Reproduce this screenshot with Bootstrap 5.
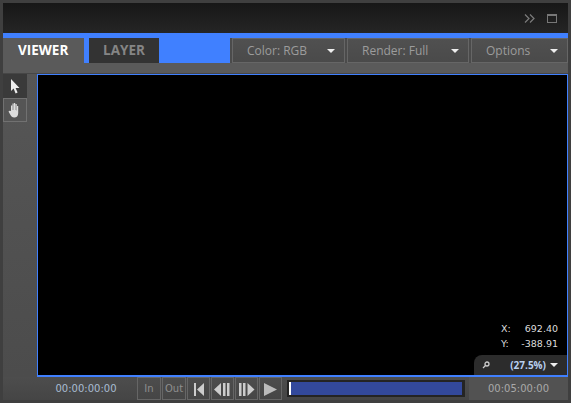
<!DOCTYPE html>
<html lang="en"><head><meta charset="utf-8">
<link href="https://cdn.jsdelivr.net/npm/bootstrap@5.3.0/dist/css/bootstrap.min.css" rel="stylesheet">
<style>
html,body{height:403px;width:571px;overflow:hidden;margin:0;background:#444}
.shell{width:571px;height:403px;padding:3px;background:#3f3f3f;font-family:"Open Sans","DejaVu Sans",sans-serif}
.titlebar{height:30px;background:linear-gradient(#171717,#252525);padding-right:11px;gap:12px;flex:none}
.tabstrip{height:30px;background:#4080ff;padding-top:5px;flex:none}
.vtab{width:81px;height:25px;background:#5a5a5a;color:#fff;font:bold 13.5px "Open Sans",sans-serif;padding-left:15px;line-height:24px}
.ltab{width:70px;height:25px;background:#333;color:#858585;font:bold 13.5px "Open Sans",sans-serif;margin-left:5px;text-align:center;line-height:24px}
.menus{margin-left:auto;background:#4b4b4b;height:25px;padding-left:2px;gap:2px;width:338px}
.menubtn{height:25px;background:linear-gradient(#505050,#4a4a4a);border:1px solid #666;color:#9c9c9c;font-size:12px;line-height:22px;padding:0 9px 0 14px;justify-content:space-between;align-items:center}
.caretd{width:0;height:0;border-left:4px solid transparent;border-right:4px solid transparent;border-top:4px solid #eee;flex:none}
.m1{width:113px}.m2{width:122px}.m3{width:97px}
.sep{height:11px;background:#5a5a5a;border-bottom:1px solid #464646;flex:none}
.middle{flex:1;min-height:0;background:linear-gradient(#565656,#4c4c4c)}
.rail{width:34px;flex:none}
.toolc{width:24px;height:24px;background:#3a3a3a}
.toolh{width:24px;height:24px;background:#555;border:1px solid #717171}
.toolw{background:#333;width:24px}
.stage{flex:1;background:#000;border-top:1px solid #4080ff;border-left:1px solid #4080ff;border-right:1px solid #4080ff;position:relative}
.coords{position:absolute;right:9px;top:246px;color:#ddd;font:9.5px/15px "DejaVu Sans",sans-serif;width:57px}
.zoomtag{position:absolute;right:0;bottom:0;width:93px;height:20px;background:#2c2c2c;border-top-left-radius:8px;font:bold 10px "Open Sans",sans-serif;color:#b9d0f0;padding:0 9px 0 8px}
.bottombar{height:23px;background:linear-gradient(#4d4d4d,#454545);flex:none}
.railcap{height:2px;width:34px;background:#4c4c4c;flex:none}
.bluel{height:2px;background:#4080ff;flex:1}
.tcl{width:100px;text-align:center;color:#a8bcd2;font:10px "DejaVu Sans",sans-serif;margin-left:33px;margin-right:1px;flex:none}
.tcr{width:99px;text-align:center;color:#a9a9a9;font:10px "DejaVu Sans",sans-serif;background:#525252;flex:none;align-self:stretch;line-height:23px}
.cbtn{width:23px;height:23px;border:1px solid #666;color:#8e8e8e;font:10px/21px "DejaVu Sans",sans-serif;text-align:center;margin-right:1px;flex:none}
.wide{width:24px}
.track{width:178px;height:17px;background:#242424;padding:2px 3px 2px 2px;margin:0 4px 0 4px;flex:none}
.trackfill{height:13px;width:100%;background:#33499c;border-left:2px solid #fff}
</style></head><body>
<div class="shell d-flex flex-column">
<div class="titlebar d-flex align-items-center justify-content-end">
<svg width="11" height="9" viewBox="0 0 11 9" fill="none" stroke="#7c7c7c" stroke-width="1.2"><path d="M1 .5 5 4.500 1 8.500M6 .5 10 4.500 6 8.500"/></svg>
<svg width="10" height="9" viewBox="0 0 10 9" fill="none" stroke="#777"><rect x=".5" y=".5" width="9" height="8"/><path d="M0 1.500h10"/></svg>
</div>
<div class="tabstrip d-flex">
<div class="vtab">VIEWER</div><div class="ltab">LAYER</div>
<div class="menus d-flex">
<div class="menubtn d-flex m1"><span>Color: RGB</span><i class="caretd"></i></div>
<div class="menubtn d-flex m2"><span>Render: Full</span><i class="caretd"></i></div>
<div class="menubtn d-flex m3"><span>Options</span><i class="caretd"></i></div>
</div></div>
<div class="sep"></div>
<div class="middle d-flex">
<div class="rail"><div class="toolw">
<div class="toolc d-flex align-items-center justify-content-center"><svg width="10" height="15" viewBox="0 0 10 15"><path d="M1 0V12L3.600 9.600 5.600 14.500 7.600 13.600 5.600 9H9.500Z" fill="#eee"/></svg></div>
<div class="toolh d-flex align-items-center justify-content-center"><svg width="14" height="16" viewBox="0 0 14 16"><path d="M3 9V3.500h1.200V8h.3V1.500h1.200V8H6V1h1.200v7h.3V2h1.200v6.500h.3V4h1.200v7c0 3-1.500 4.500-4 4.500-2 0-3-1-4-3L.5 9.500 1.500 8.800Z" fill="#ddd"/></svg></div>
</div></div>
<div class="stage">
<div class="coords"><div class="d-flex justify-content-between"><span>X:</span><span>692.40</span></div><div class="d-flex justify-content-between"><span>Y:</span><span>-388.91</span></div></div>
<div class="zoomtag d-flex align-items-center"><svg width="8" height="8" viewBox="0 0 8 8" fill="none" stroke="#ccc" stroke-width="1.300"><circle cx="5" cy="3" r="2"/><path d="M3.500 4.500 1 7"/></svg><span class="ms-auto">(27.5%)</span><i class="caretd ms-1"></i></div>
</div></div>
<div class="d-flex"><div class="railcap"></div><div class="bluel"></div></div>
<div class="bottombar d-flex align-items-center">
<div class="tcl">00:00:00:00</div>
<div class="cbtn wide">In</div><div class="cbtn wide">Out</div>
<div class="cbtn"><svg width="12" height="13" viewBox="0 0 12 13" fill="#ccc"><rect x="1" y="0" width="2" height="13"/><path d="M11 0V13L4 6.500Z"/></svg></div>
<div class="cbtn"><svg width="17" height="13" viewBox="0 0 17 13" fill="#ccc"><path d="M7 0V13L0 6.500Z"/><rect x="9" width="2.500" height="13"/><rect x="13" width="2.500" height="13"/></svg></div>
<div class="cbtn"><svg width="17" height="13" viewBox="0 0 17 13" fill="#ccc"><rect x="1" width="2.500" height="13"/><rect x="5" width="2.500" height="13"/><path d="M9.500 0V13L16.500 6.500Z"/></svg></div>
<div class="cbtn"><svg width="15" height="13" viewBox="0 0 15 13" fill="#bbb"><path d="M1 0V13L14 6.500Z"/></svg></div>
<div class="track"><div class="trackfill"></div></div>
<div class="tcr">00:05:00:00</div>
</div>
</div>
</body></html>
